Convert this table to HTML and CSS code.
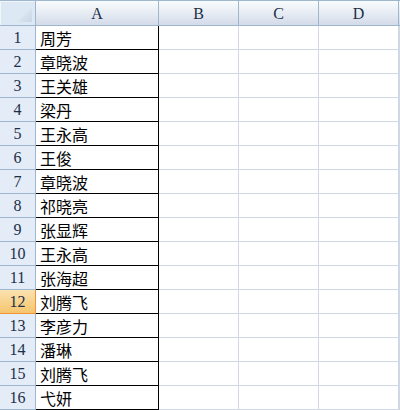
FILE: index.html
```html
<!DOCTYPE html>
<html>
<head>
<meta charset="utf-8">
<link rel="stylesheet" href="styles.css">
</head>
<body>
<div class="sheet">
  <div class="corner"><span class="tri"></span></div>
  <div class="colhead">A</div>
  <div class="colhead">B</div>
  <div class="colhead">C</div>
  <div class="colhead">D</div>
  <div class="colhead last"></div>

  <div class="rowhead">1</div><div class="cell a">周芳</div><div class="cell"></div><div class="cell"></div><div class="cell"></div><div class="cell"></div>
  <div class="rowhead">2</div><div class="cell a">章晓波</div><div class="cell"></div><div class="cell"></div><div class="cell"></div><div class="cell"></div>
  <div class="rowhead">3</div><div class="cell a">王关雄</div><div class="cell"></div><div class="cell"></div><div class="cell"></div><div class="cell"></div>
  <div class="rowhead">4</div><div class="cell a">梁丹</div><div class="cell"></div><div class="cell"></div><div class="cell"></div><div class="cell"></div>
  <div class="rowhead">5</div><div class="cell a">王永高</div><div class="cell"></div><div class="cell"></div><div class="cell"></div><div class="cell"></div>
  <div class="rowhead">6</div><div class="cell a">王俊</div><div class="cell"></div><div class="cell"></div><div class="cell"></div><div class="cell"></div>
  <div class="rowhead">7</div><div class="cell a">章晓波</div><div class="cell"></div><div class="cell"></div><div class="cell"></div><div class="cell"></div>
  <div class="rowhead">8</div><div class="cell a">祁晓亮</div><div class="cell"></div><div class="cell"></div><div class="cell"></div><div class="cell"></div>
  <div class="rowhead">9</div><div class="cell a">张显辉</div><div class="cell"></div><div class="cell"></div><div class="cell"></div><div class="cell"></div>
  <div class="rowhead">10</div><div class="cell a">王永高</div><div class="cell"></div><div class="cell"></div><div class="cell"></div><div class="cell"></div>
  <div class="rowhead">11</div><div class="cell a">张海超</div><div class="cell"></div><div class="cell"></div><div class="cell"></div><div class="cell"></div>
  <div class="rowhead sel">12</div><div class="cell a">刘腾飞</div><div class="cell"></div><div class="cell"></div><div class="cell"></div><div class="cell"></div>
  <div class="rowhead">13</div><div class="cell a">李彦力</div><div class="cell"></div><div class="cell"></div><div class="cell"></div><div class="cell"></div>
  <div class="rowhead">14</div><div class="cell a">潘琳</div><div class="cell"></div><div class="cell"></div><div class="cell"></div><div class="cell"></div>
  <div class="rowhead">15</div><div class="cell a">刘腾飞</div><div class="cell"></div><div class="cell"></div><div class="cell"></div><div class="cell"></div>
  <div class="rowhead">16</div><div class="cell a">弋妍</div><div class="cell"></div><div class="cell"></div><div class="cell"></div><div class="cell"></div>
</div>
</body>
</html>
```
FILE: styles.css
```css
html, body {
  margin: 0;
  padding: 0;
  background: #ffffff;
  overflow: hidden;
}
.sheet {
  display: grid;
  grid-template-columns: 36px 123px 80px 80px 80px 1fr;
  grid-template-rows: 26px repeat(16, 24px);
  width: 400px;
  font-family: "Liberation Serif", "DejaVu Serif", serif;
}
.sheet > div {
  box-sizing: border-box;
}
.corner {
  position: relative;
  border-top: 1px solid #9eb6ce;
  border-right: 1px solid #9eb6ce;
  border-bottom: 1px solid #9eb6ce;
  background: #dde8f5;
  box-shadow: inset 1px 1px 0 #f2f6fb;
}
.tri {
  position: absolute;
  right: 3px;
  bottom: 3px;
  width: 15px;
  height: 15px;
  background: linear-gradient(135deg, #eef3f9 0%, #c6d5e6 100%);
  clip-path: polygon(100% 0, 100% 100%, 0 100%);
}
.colhead {
  border-top: 1px solid #9eb6ce;
  border-right: 1px solid #9eb6ce;
  border-bottom: 1px solid #9eb6ce;
  background: linear-gradient(#f9fcfd, #e3e9f2 60%, #d3dbe9);
  color: #1c2f48;
  font-size: 16px;
  display: flex;
  align-items: center;
  justify-content: center;
  padding-top: 1px;
}
.colhead.last {
  border-right: none;
}
.rowhead {
  border-right: 1px solid #9eb6ce;
  border-bottom: 1px solid #9eb6ce;
  background: #e4ecf7;
  color: #1c2f48;
  font-size: 16px;
  display: flex;
  align-items: center;
  justify-content: center;
  padding-top: 1px;
}
.rowhead.sel {
  background: linear-gradient(#fbe2b2, #f8d38e 50%, #f6c56e);
  border-right: 1px solid #f29436;
  border-bottom: 1px solid #f29436;
}
.cell {
  border-right: 1px solid #d0d7e5;
  border-bottom: 1px solid #d0d7e5;
}
.cell.a {
  border-right: 1px solid #000000;
  border-bottom: 1px solid #000000;
  font-family: "Noto Sans CJK SC", sans-serif;
  font-size: 16px;
  color: #000000;
  display: flex;
  align-items: center;
  padding-left: 4px;
  line-height: 1;
}
```
